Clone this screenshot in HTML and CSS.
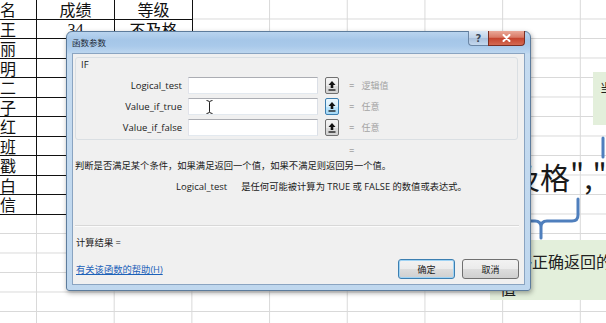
FILE: index.html
```html
<!DOCTYPE html>
<html lang="zh-CN">
<head>
<meta charset="utf-8">
<title>函数参数</title>
<link rel="stylesheet" href="styles.css">
</head>
<body>
<div class="sheet">
  <div class="table">
    <div class="cell name">名</div><div class="cell">成绩</div><div class="cell">等级</div>
    <div class="cell name">王</div><div class="cell num">34</div><div class="cell">不及格</div>
    <div class="cell name">丽</div><div class="cell num"></div><div class="cell"></div>
    <div class="cell name">明</div><div class="cell num"></div><div class="cell"></div>
    <div class="cell name">二</div><div class="cell num"></div><div class="cell"></div>
    <div class="cell name">子</div><div class="cell num"></div><div class="cell"></div>
    <div class="cell name">红</div><div class="cell num"></div><div class="cell"></div>
    <div class="cell name">班</div><div class="cell num"></div><div class="cell"></div>
    <div class="cell name">戳</div><div class="cell num"></div><div class="cell"></div>
    <div class="cell name">白</div><div class="cell num"></div><div class="cell"></div>
    <div class="cell name">信</div><div class="cell num"></div><div class="cell"></div>
  </div>

  <div class="note note-top">当</div>
  <div class="formula">及格","</div>
  <svg class="brace" viewBox="500 130 106 120" width="106" height="120">
    <path d="M500 221 H535 Q541 221 541 227 V238 M541 227 Q541 221 547 221 H572 Q578 221 578 215 V199 M603 138 V157" />
  </svg>
  <div class="note note-bottom">
    <div class="note-line">能够正确返回的数</div>
    <div class="note-line">值</div>
  </div>

  <div class="dialog">
    <div class="titlebar">
      <span class="title">函数参数</span>
      <div class="caption">
        <span class="cap cap-help">?</span>
        <span class="cap cap-close">
          <svg width="9" height="8" viewBox="0 0 9 8"><path d="M1.5 1 L7.5 7 M7.5 1 L1.5 7"/></svg>
        </span>
      </div>
    </div>
    <div class="client">
      <div class="group">
        <div class="group-title">IF</div>
        <div class="args">
          <div class="arg-row">
            <span class="arg-label">Logical_test</span>
            <span class="field"></span>
            <span class="refbtn"><svg width="8" height="11" viewBox="0 0 8 11"><path class="arrow" d="M4 1 L7.5 5 H5.3 V8 H2.7 V5 H0.5 Z"/><path class="bar" d="M0.5 10 H7.5"/></svg></span>
            <span class="eq">=</span>
            <span class="hint">逻辑值</span>
          </div>
          <div class="arg-row">
            <span class="arg-label">Value_if_true</span>
            <span class="field field-active">
              <svg class="ibeam" width="7" height="14" viewBox="0 0 7 14"><path d="M0.5 0.5 Q3.5 0.5 3.5 2.5 Q3.5 0.5 6.5 0.5 M3.5 2.5 V11.5 M0.5 13.5 Q3.5 13.5 3.5 11.5 Q3.5 13.5 6.5 13.5"/></svg>
            </span>
            <span class="refbtn refbtn-hot"><svg width="8" height="11" viewBox="0 0 8 11"><path class="arrow" d="M4 1 L7.5 5 H5.3 V8 H2.7 V5 H0.5 Z"/><path class="bar" d="M0.5 10 H7.5"/></svg></span>
            <span class="eq">=</span>
            <span class="hint">任意</span>
          </div>
          <div class="arg-row">
            <span class="arg-label">Value_if_false</span>
            <span class="field"></span>
            <span class="refbtn"><svg width="8" height="11" viewBox="0 0 8 11"><path class="arrow" d="M4 1 L7.5 5 H5.3 V8 H2.7 V5 H0.5 Z"/><path class="bar" d="M0.5 10 H7.5"/></svg></span>
            <span class="eq">=</span>
            <span class="hint">任意</span>
          </div>
        </div>
      </div>
      <div class="result-row"><span class="eq">=</span></div>
      <div class="desc">判断是否满足某个条件，如果满足返回一个值，如果不满足则返回另一个值。</div>
      <div class="arg-desc"><span class="arg-name">Logical_test</span>是任何可能被计算为 TRUE 或 FALSE 的数值或表达式。</div>
      <div class="sep"></div>
      <div class="calc">计算结果 =</div>
      <div class="footer">
        <a class="help-link" href="#">有关该函数的帮助(H)</a>
        <div class="btns">
          <button class="btn btn-default">确定</button>
          <button class="btn">取消</button>
        </div>
      </div>
    </div>
  </div>
</div>
</body>
</html>
```

FILE: styles.css
```css
html, body {
  margin: 0;
  padding: 0;
}

body {
  width: 606px;
  height: 323px;
  overflow: hidden;
  background: #fff;
}

.sheet {
  position: relative;
  width: 606px;
  height: 323px;
  overflow: hidden;
  background-color: #fff;
  background-image:
    linear-gradient(to right, #d9d9d9 1px, transparent 1px),
    linear-gradient(to bottom, #d9d9d9 1px, transparent 1px);
  background-size: 77.7px 100%, 100% 19.5px;
  background-position: 36px 0, 0 18.5px;
  font-family: "Noto Sans CJK SC", sans-serif;
}

/* ---------- spreadsheet data ---------- */
.table {
  display: grid;
  grid-template-columns: 37px 78px 78px;
  grid-template-rows: repeat(11, 19.5px);
  width: 193px;
  background: #fff;
}

.cell {
  box-sizing: border-box;
  border-right: 1px solid #111;
  border-bottom: 1px solid #111;
  font-family: "Noto Sans CJK SC", sans-serif;
  font-size: 16px;
  line-height: 18px;
  text-align: center;
  color: #111;
  white-space: nowrap;
}

.cell.name {
  text-align: left;
}

.cell.num {
  font-family: "Liberation Serif", "Noto Sans CJK SC", serif;
  font-size: 16px;
  line-height: 20px;
}

/* ---------- annotations on the sheet ---------- */
.note {
  position: absolute;
  background: #e3efdb;
  color: #222;
  overflow: hidden;
  white-space: nowrap;
}

.note-top {
  left: 593px;
  top: 72px;
  width: 40px;
  height: 53px;
  box-sizing: border-box;
  padding: 9px 0 0 7px;
  font-size: 12px;
  line-height: 14px;
}

.note-bottom {
  left: 490px;
  top: 240px;
  width: 130px;
  height: 60px;
  box-sizing: border-box;
  padding: 8px 0 0 10px;
  font-size: 16px;
  line-height: 27px;
}

.formula {
  position: absolute;
  left: 510px;
  top: 160px;
  font-size: 30px;
  line-height: 32px;
  color: #1a1a1a;
  white-space: nowrap;
}

.brace {
  position: absolute;
  left: 500px;
  top: 130px;
}

.brace path {
  fill: none;
  stroke: #4f7fbd;
  stroke-width: 3;
  stroke-linecap: round;
  stroke-linejoin: round;
}

/* ---------- dialog ---------- */
.dialog {
  position: absolute;
  left: 66px;
  top: 31px;
  width: 465px;
  height: 260px;
  box-sizing: border-box;
  border: 1px solid #5d7c9c;
  border-radius: 6px 6px 3px 3px;
  padding: 0 5px 5px;
  display: flex;
  flex-direction: column;
  background:
    linear-gradient(to bottom, #b9d4ef 0, #a5c6e8 8px, #a9c9ea 14px, #bcd6ef 21px, #c5dbf0 22px, #bfd7ee 100%);
  box-shadow: 1px 2px 5px rgba(0, 0, 0, 0.35);
  font-family: "Open Sans", "Noto Sans CJK SC", sans-serif;
  font-size: 9.5px;
  color: #1a1a1a;
}

.titlebar {
  height: 21px;
  display: flex;
  justify-content: space-between;
  align-items: flex-start;
}

.title {
  font-family: "Noto Sans CJK SC", sans-serif;
  font-size: 8.5px;
  line-height: 21px;
  color: #1e2a38;
}

.caption {
  display: flex;
  margin-top: -1px;
}

.cap {
  height: 15px;
  box-sizing: border-box;
  display: flex;
  align-items: center;
  justify-content: center;
}

.cap-help {
  width: 20px;
  border: 1px solid #6b86a5;
  border-top: none;
  border-right: none;
  border-radius: 0 0 0 4px;
  background: linear-gradient(to bottom, #dce8f5, #c0d3e8 48%, #a9c0dc 52%, #c4d8ee);
  font-family: "DejaVu Sans", sans-serif;
  font-weight: bold;
  font-size: 10px;
  color: #3a4a5c;
}

.cap-close {
  width: 37px;
  border: 1px solid #7a2e23;
  border-top: none;
  border-radius: 0 0 4px 0;
  background: linear-gradient(to bottom, #eaa898, #d97a66 45%, #c5442e 52%, #d46a52);
}

.cap-close path {
  stroke: #fff;
  stroke-width: 2;
  stroke-linecap: round;
}

.client {
  height: 232px;
  box-sizing: border-box;
  border: 1px solid #8aa4c1;
  background: #f0f0f0;
}

.group {
  margin: 3px 0 0 2px;
  width: 443px;
  height: 83px;
  box-sizing: border-box;
  border: 1px solid #dadfe3;
  border-radius: 3px;
  padding: 1px 0 0 5px;
}

.group-title {
  height: 12px;
  line-height: 12px;
}

.args {
  margin-top: 6px;
  display: flex;
  flex-direction: column;
  gap: 4px;
}

.arg-row {
  display: flex;
  align-items: center;
  height: 17px;
}

.arg-label {
  width: 101px;
  text-align: right;
  white-space: nowrap;
}

.field {
  position: relative;
  margin-left: 6px;
  width: 130px;
  height: 17px;
  box-sizing: border-box;
  background: #fff;
  border: 1px solid;
  border-color: #abadb3 #dbdfe6 #e3e9ef #e2e3ea;
}

.ibeam {
  position: absolute;
  left: 17px;
  top: 1px;
}

.ibeam path {
  fill: none;
  stroke: #222;
  stroke-width: 1;
}

.refbtn {
  margin-left: 7px;
  width: 14px;
  height: 17px;
  box-sizing: border-box;
  border: 1px solid #707070;
  border-radius: 2px;
  background: linear-gradient(to bottom, #f4f4f4, #ebebeb 50%, #dddddd 51%, #d2d2d2);
  display: flex;
  align-items: center;
  justify-content: center;
}

.refbtn-hot {
  border-color: #3c7fb1;
  background: linear-gradient(to bottom, #eaf6fd, #d9f0fc 50%, #bee6fd 51%, #a7d9f5);
}

.refbtn .arrow {
  fill: #111;
}

.refbtn .bar {
  stroke: #111;
  stroke-width: 1.3;
}

.eq {
  margin-left: 10px;
  color: #7a7a7a;
}

.hint {
  margin-left: 7px;
  color: #a3a3a3;
  font-family: "Noto Sans CJK SC", sans-serif;
  font-size: 9px;
}

.result-row {
  display: flex;
  margin-top: 5px;
  padding-left: 266px;
  height: 12px;
  line-height: 12px;
}

.desc {
  margin: 3px 0 0 2px;
  line-height: 12px;
  height: 12px;
  font-size: 9.3px;
  white-space: nowrap;
}

.arg-desc {
  margin: 9px 0 0 103px;
  line-height: 12px;
  height: 12px;
  font-size: 9.3px;
  white-space: nowrap;
}

.arg-name {
  margin-right: 14px;
  font-size: 9.5px;
}

.sep {
  margin: 32px 0 0 2px;
  width: 444px;
  height: 1px;
  background: #d8d8d8;
  border-bottom: 1px solid #fbfbfb;
}

.calc {
  margin: 10px 0 0 3px;
  line-height: 12px;
  height: 12px;
  font-size: 9.3px;
}

.footer {
  margin-top: 10px;
  height: 20px;
  display: flex;
  align-items: center;
  justify-content: space-between;
  padding: 0 5px 0 3px;
}

.help-link {
  color: #1c62b9;
  text-decoration: underline;
  font-size: 9.3px;
}

.btns {
  display: flex;
  gap: 7px;
}

.btn {
  width: 57px;
  height: 20px;
  margin: 0;
  padding: 0;
  box-sizing: border-box;
  border: 1px solid #707070;
  border-radius: 3px;
  background: linear-gradient(to bottom, #f2f2f2, #ebebeb 50%, #dddddd 51%, #cfcfcf);
  font-family: "Noto Sans CJK SC", sans-serif;
  font-size: 9px;
  color: #1a1a1a;
}

.btn-default {
  border-color: #3c7fb1;
  box-shadow: inset 0 0 0 1px #9fd3f4;
}
```
